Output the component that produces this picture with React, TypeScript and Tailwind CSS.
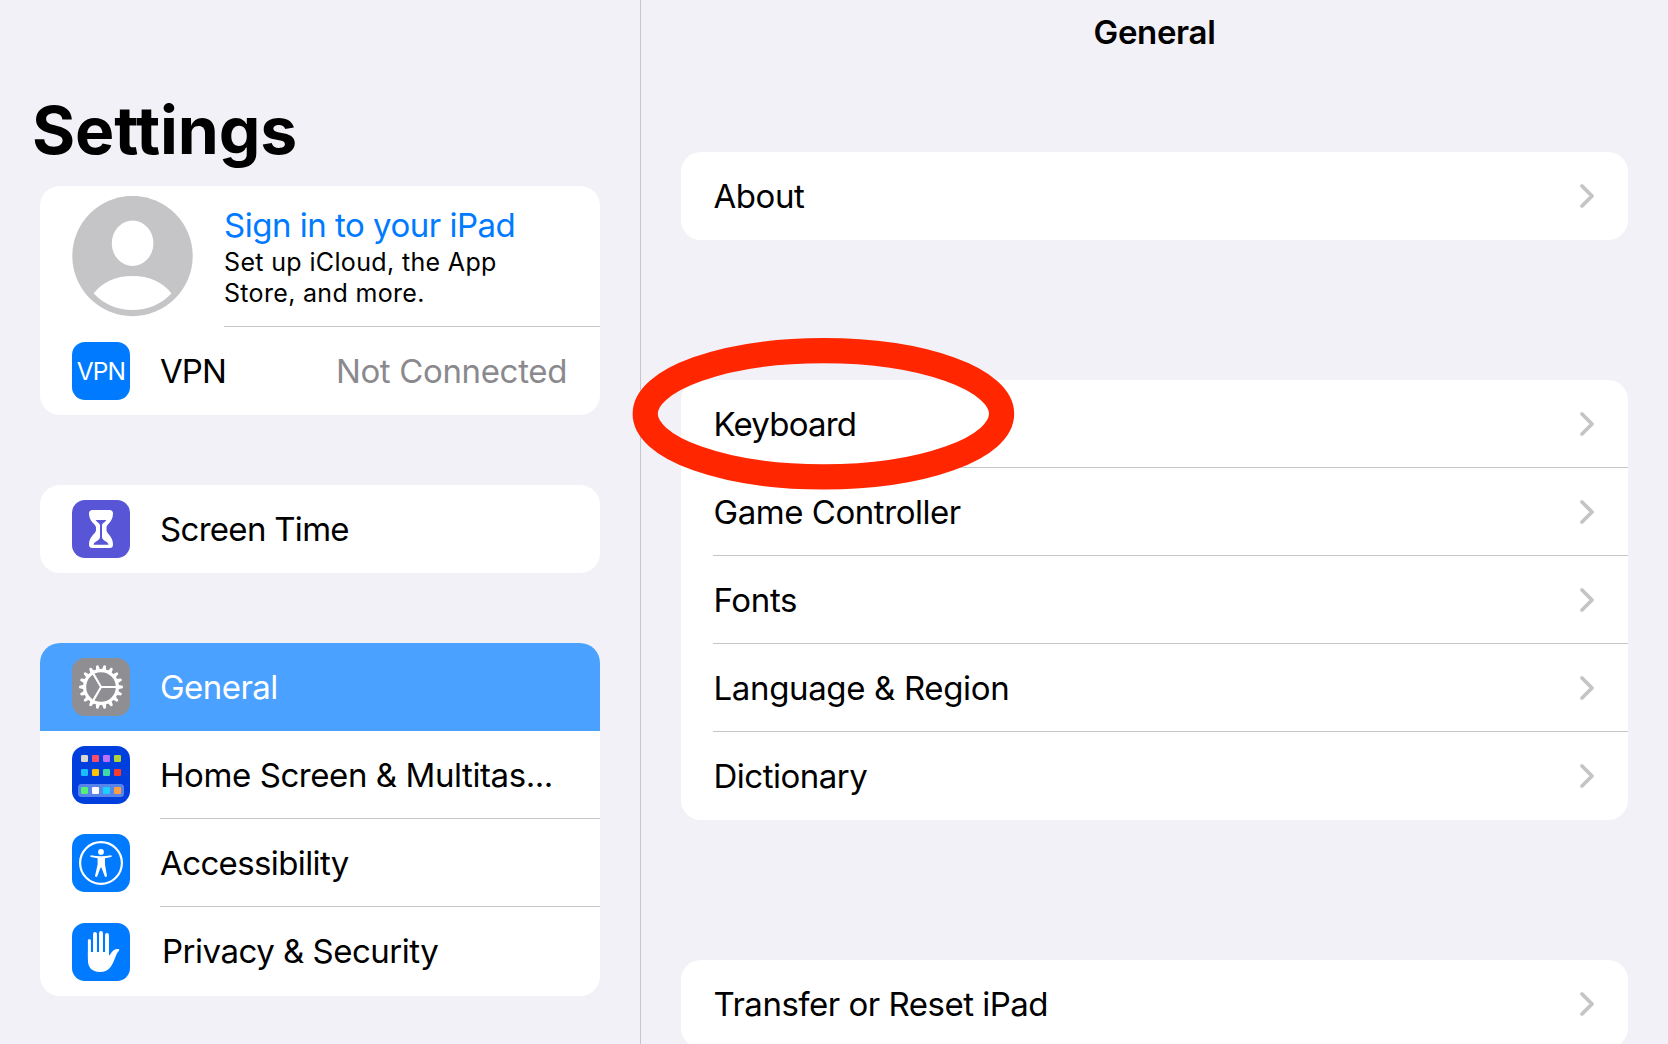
import type { ReactNode } from "react";

function Chevron() {
  return (
    <svg className="mr-8 h-7 w-[18px] shrink-0" viewBox="0 0 18 28" fill="none">
      <path d="M4 4 L14 14 L4 24" stroke="#c5c5c7" strokeWidth="3.8" strokeLinecap="round" strokeLinejoin="round" />
    </svg>
  );
}

function Avatar() {
  return (
    <svg className="mt-2.5 ml-8 h-[121px] w-[121px] shrink-0" viewBox="0 0 121 121">
      <circle cx="60.5" cy="60" r="60.2" fill="#c5c5c7" />
      <ellipse cx="60.6" cy="47.3" rx="20.8" ry="22.7" fill="#fff" />
      <path d="M21.7 97.5 C30 86 44 80 60.5 80 C77 80 91 86 99.5 97.5 C89 108.5 75 114 60.5 114 C46 114 32 108.5 21.7 97.5 Z" fill="#fff" />
    </svg>
  );
}

function HourglassIcon() {
  return (
    <svg className="h-full w-full" viewBox="0 0 58 58">
      <path
        d="M20.5 10 H37.5 Q41 10 41 13.5 C41 22 34.5 24 34.5 27.5 V30 C34.5 34 41 36 41 44.5 Q41 48 37.5 48 H20.5 Q17 48 17 44.5 C17 36 24 34 24 30 V27.5 C24 24 17 22 17 13.5 Q17 10 20.5 10 Z"
        fill="#fff"
      />
      <path
        d="M23.6 20 H34.4 C33 22.5 30 23 30 25.5 V37 C30 41 36 41 36.5 44.8 H21.5 C22 41 28 41 28 37 V25.5 C28 23 25 22.5 23.6 20 Z"
        fill="#5856d6"
      />
    </svg>
  );
}

const TEETH = Array.from({ length: 18 }, (_, i) => i * 20);

function GearIcon() {
  return (
    <svg className="h-full w-full" viewBox="0 0 58 58">
      <g transform="translate(29 29)">
        <circle r="16.4" fill="none" stroke="#fff" strokeWidth="3.2" />
        {TEETH.map((a) => (
          <path key={a} d="M17 -2.2 L21.6 -1.2 Q22.6 0 21.6 1.2 L17 2.2 Z" fill="#fff" transform={`rotate(${a})`} />
        ))}
        {[0, 120, 240].map((a) => (
          <path key={a} d="M0 0 H16" stroke="#fff" strokeWidth="2.1" transform={`rotate(${a})`} />
        ))}
      </g>
    </svg>
  );
}

const APPS: [number, number, string][] = [
  [9, 9, "#d8d6ce"], [20, 9, "#ff4d67"], [31, 9, "#b970ff"], [42, 9, "#b0d138"],
  [9, 23, "#1abcff"], [20, 23, "#ffc400"], [31, 23, "#3ed9a4"], [42, 23, "#ff3a2d"],
  [9, 41, "#54f073"], [20, 41, "#ffffff"], [31, 41, "#1acfff"], [42, 41, "#ff9d45"],
];

function HomeIcon() {
  return (
    <svg className="h-full w-full" viewBox="0 0 58 58">
      <rect x="6" y="38" width="46" height="13" rx="3.5" fill="#5785eb" />
      {APPS.map(([x, y, c]) => (
        <rect key={`${x}-${y}`} x={x} y={y} width="7" height="7" rx="1.3" fill={c} />
      ))}
    </svg>
  );
}

function AccessibilityIcon() {
  return (
    <svg className="h-full w-full" viewBox="0 0 58 58">
      <circle cx="29" cy="29" r="20.9" fill="none" stroke="#fff" strokeWidth="2.2" />
      <circle cx="29" cy="17.9" r="2.9" fill="#fff" />
      <path
        d="M18.8 21.2 Q29 23.2 39.2 21.2 Q40.4 22.2 39.2 23.1 L33 24.3 V30.5 L35 42 Q34 43.8 32.8 42.6 L29.4 33.5 H28.6 L25.2 42.6 Q24 43.8 23 42 L25.6 30.5 V24.3 L18.8 23.1 Q17.6 22.2 18.8 21.2 Z"
        fill="#fff"
      />
    </svg>
  );
}

function HandIcon() {
  return (
    <svg className="h-full w-full" viewBox="0 0 58 58" fill="none">
      <g stroke="#fff" strokeLinecap="round">
        <path d="M17.4 17.5 V34" strokeWidth="3" />
        <path d="M23 10.9 V34" strokeWidth="3.9" />
        <path d="M29 10 V34" strokeWidth="3.9" />
        <path d="M35 12 V34" strokeWidth="3.9" />
      </g>
      <path
        d="M15.9 29 H36.9 V32.5 Q38 32 39.5 29.5 C42 26 44 25.8 46.3 26 Q48 26.3 47 27.8 C45 30 44.5 31.5 43 35 C40 43 37 49 28 49 C19.5 49 15.9 44 15.9 37 Z"
        fill="#fff"
      />
    </svg>
  );
}

type SideRowProps = {
  icon: ReactNode;
  iconClass: string;
  label: string;
  labelClass: string;
  className?: string;
  value?: ReactNode;
};

function SideRow({ icon, iconClass, label, labelClass, className = "", value }: SideRowProps) {
  return (
    <div className={`flex items-center pl-8 ${className}`}>
      <div className={`mr-[30px] size-[58px] shrink-0 overflow-hidden rounded-[13px] ${iconClass}`}>{icon}</div>
      <span className={`whitespace-nowrap ${labelClass}`}>{label}</span>
      {value}
    </div>
  );
}

function SideDivider() {
  return <div className="ml-[120px] h-px bg-[#c6c6c8]" />;
}

function DetailRow({ label, labelClass, last = false }: { label: string; labelClass: string; last?: boolean }) {
  return (
    <div className="pl-8">
      <div className={`flex h-[88px] items-center justify-between ${last ? "" : "border-b border-[#c6c6c8]"}`}>
        <span className={`pl-[0.5px] whitespace-nowrap ${labelClass}`}>{label}</span>
        <Chevron />
      </div>
    </div>
  );
}

export default function App() {
  return (
    <div className="relative flex h-[1044px] w-[1668px] overflow-hidden bg-[#f2f1f7] font-['Inter',sans-serif] text-[33px] leading-10 text-black">
      <aside className="flex w-[641px] shrink-0 flex-col border-r border-[#c6c6c8] pr-10 pl-10">
        <h1 className="mt-[89px] -ml-2 h-[97px] text-[66px] leading-[82px] font-bold tracking-[-0.15px]">Settings</h1>

        <section className="h-[229px] rounded-[20px] bg-white">
          <div className="flex h-[141px]">
            <Avatar />
            <div className="ml-[31px] flex flex-1 flex-col border-b border-[#c6c6c8] pt-[19px]">
              <span className="tracking-[-0.5px] whitespace-nowrap text-[#007aff]">Sign in to your iPad</span>
              <span className="mt-0.5 text-[25px] leading-[31px] tracking-[0.35px] whitespace-nowrap">Set up iCloud, the App</span>
              <span className="text-[25px] leading-[31px] tracking-[0.32px] whitespace-nowrap">Store, and more.</span>
            </div>
          </div>
          <SideRow
            className="h-[88px]"
            iconClass="bg-[#007aff]"
            icon={<span className="flex h-full items-center justify-center text-[24.5px] tracking-[-0.9px] text-white">VPN</span>}
            label="VPN"
            labelClass="tracking-[-0.9px]"
            value={<span className="mr-[33px] ml-auto tracking-[-0.35px] whitespace-nowrap text-[#8a8a8e]">Not Connected</span>}
          />
        </section>

        <section className="mt-[70px] rounded-[20px] bg-white">
          <SideRow className="h-[88px]" iconClass="bg-[#5856d6]" icon={<HourglassIcon />} label="Screen Time" labelClass="tracking-[-0.7px]" />
        </section>

        <section className="mt-[70px] overflow-hidden rounded-[20px] bg-white">
          <SideRow className="h-[88px] bg-[#4ba1ff]" iconClass="bg-[#8e8e93]" icon={<GearIcon />} label="General" labelClass="tracking-[-0.55px] text-white" />
          <SideRow className="h-[87px]" iconClass="bg-[#003ede]" icon={<HomeIcon />} label="Home Screen & Multitas..." labelClass="tracking-[-0.42px]" />
          <SideDivider />
          <SideRow className="h-[87px]" iconClass="bg-[#007aff]" icon={<AccessibilityIcon />} label="Accessibility" labelClass="tracking-[-0.62px]" />
          <SideDivider />
          <SideRow className="h-[89px]" iconClass="bg-[#007aff]" icon={<HandIcon />} label="Privacy & Security" labelClass="pb-0.5 pl-0.5 tracking-[-0.5px]" />
        </section>
      </aside>

      <main className="flex flex-1 flex-col pr-10 pl-10">
        <h2 className="mt-3 h-10 text-center text-[33px] font-semibold tracking-[-0.35px]">General</h2>
        <section className="mt-[100px] rounded-[20px] bg-white">
          <DetailRow label="About" labelClass="tracking-[-0.45px]" last />
        </section>
        <section className="mt-[140px] rounded-[20px] bg-white">
          <DetailRow label="Keyboard" labelClass="tracking-[-0.8px]" />
          <DetailRow label="Game Controller" labelClass="tracking-[-0.45px]" />
          <DetailRow label="Fonts" labelClass="tracking-[-0.35px]" />
          <DetailRow label="Language & Region" labelClass="tracking-[-0.35px]" />
          <DetailRow label="Dictionary" labelClass="tracking-[-0.5px]" last />
        </section>
        <section className="mt-[140px] rounded-[20px] bg-white">
          <DetailRow label="Transfer or Reset iPad" labelClass="tracking-[-0.5px]" last />
        </section>
      </main>

      <svg className="absolute top-[336px] left-[631px] h-[156px] w-[386px]" viewBox="631 336 386 156" fill="none">
        <ellipse cx="823.4" cy="413.8" rx="178.2" ry="63.1" stroke="#ff2600" strokeWidth="25.2" />
      </svg>
    </div>
  );
}
